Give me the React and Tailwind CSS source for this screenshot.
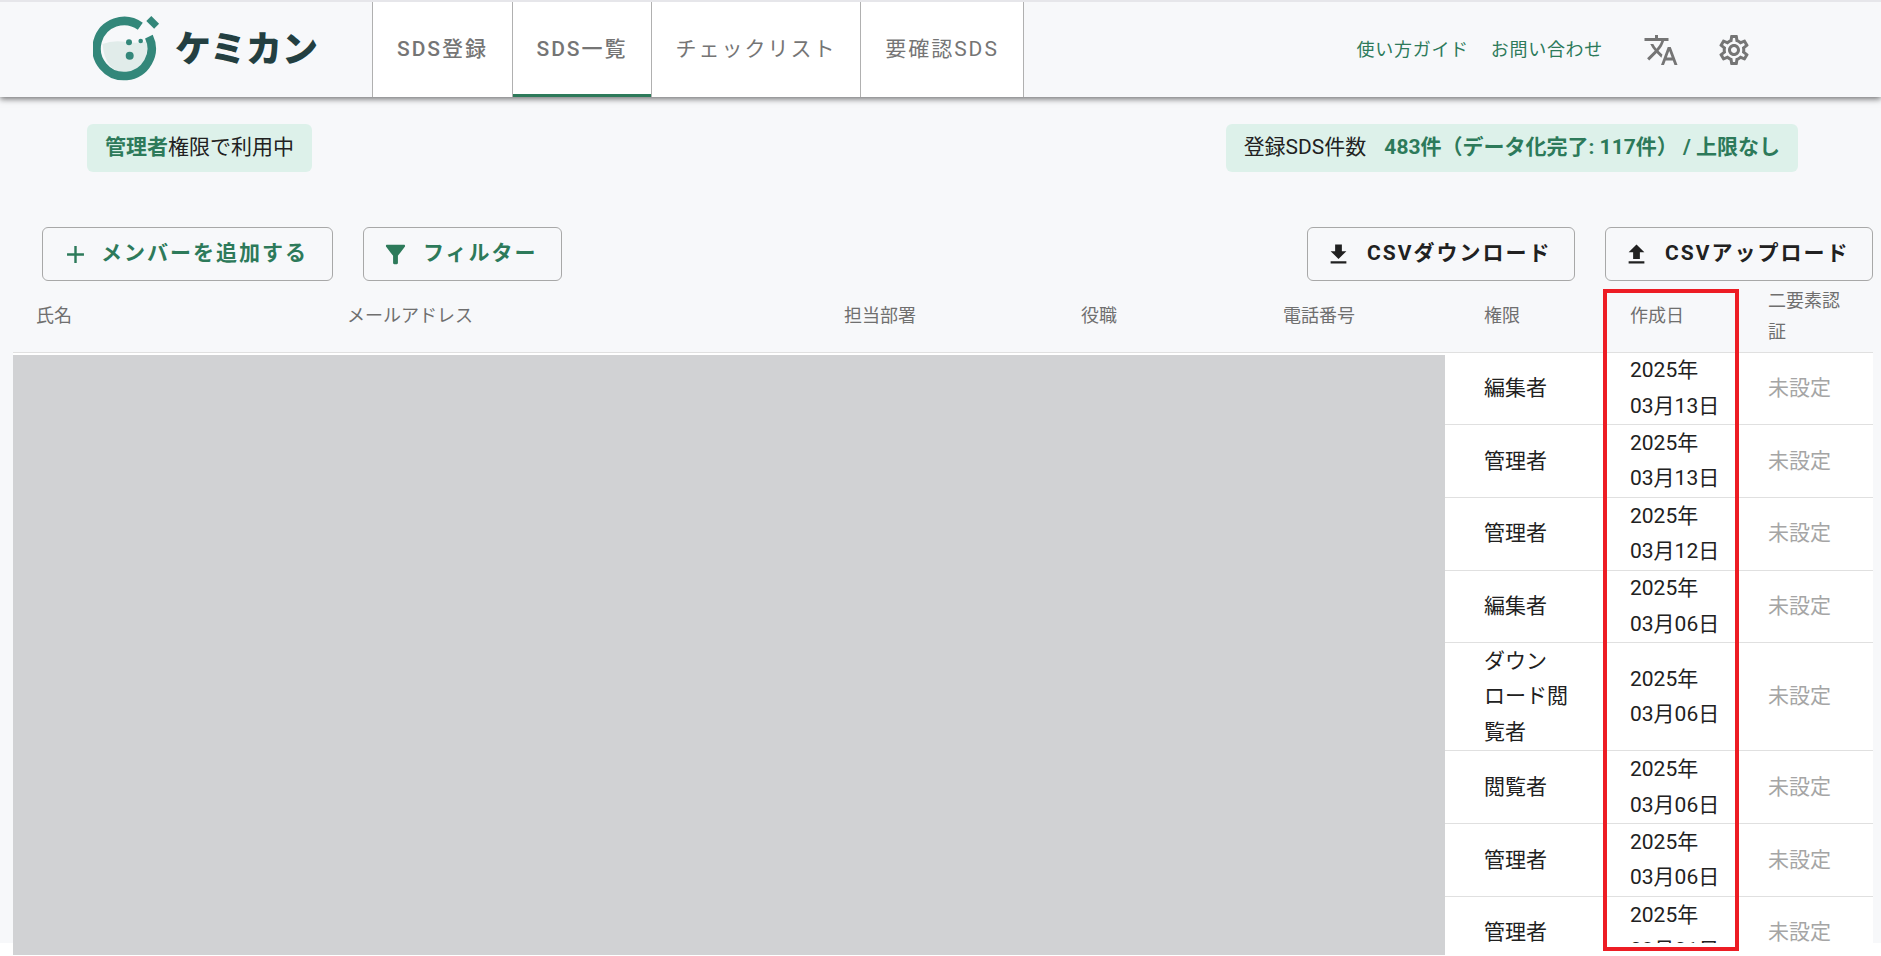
const TRANSLATE = "m12.87 15.07-2.54-2.51.03-.03c1.74-1.94 2.98-4.17 3.71-6.53H17V4h-7V2H8v2H1v1.99h11.17C11.5 7.92 10.25 9.75 9 11.17 8.19 10.23 7.46 9.27 6.87 8H4.84c.73 1.63 1.73 3.17 2.98 4.56l-5.09 5.02L4.14 19l5-5 3.11 3.11.76-2.04zM18.5 10h-2L12 22h2l1.12-3h4.75L21 22h2l-4.5-12zm-2.62 7 1.62-4.33L19.12 17h-3.24z";
const GEAR = "M19.43 12.98c.04-.32.07-.64.07-.98 0-.34-.03-.66-.07-.98l2.11-1.65c.19-.15.24-.42.12-.64l-2-3.46c-.09-.16-.26-.25-.44-.25-.06 0-.12.01-.17.03l-2.49 1c-.52-.4-1.08-.73-1.69-.98l-.38-2.65C14.46 2.18 14.25 2 14 2h-4c-.25 0-.46.18-.49.42l-.38 2.65c-.61.25-1.17.59-1.69.98l-2.49-1c-.06-.02-.12-.03-.18-.03-.17 0-.34.09-.43.25l-2 3.46c-.13.22-.07.49.12.64l2.11 1.65c-.04.32-.07.65-.07.98 0 .33.03.66.07.98l-2.11 1.65c-.19.15-.24.42-.12.64l2 3.46c.09.16.26.25.44.25.06 0 .12-.01.17-.03l2.49-1c.52.4 1.08.73 1.69.98l.38 2.65c.03.24.24.42.49.42h4c.25 0 .46-.18.49-.42l.38-2.65c.61-.25 1.17-.59 1.69-.98l2.49 1c.06.02.12.03.18.03.17 0 .34-.09.43-.25l2-3.46c.12-.22.07-.49-.12-.64l-2.11-1.65zm-1.98-1.71c.04.31.05.52.05.73 0 .21-.02.43-.05.73l-.14 1.13.89.7 1.08.84-.7 1.21-1.27-.51-1.04-.42-.9.68c-.43.32-.84.56-1.25.73l-1.06.43-.16 1.13-.2 1.35h-1.4l-.19-1.35-.16-1.13-1.06-.43c-.43-.18-.83-.41-1.23-.71l-.91-.7-1.06.43-1.27.51-.7-1.21 1.08-.84.89-.7-.14-1.13c-.03-.31-.05-.54-.05-.74s.02-.43.05-.73l.14-1.13-.89-.7-1.08-.84.7-1.21 1.27.51 1.04.42.9-.68c.43-.32.84-.56 1.25-.73l1.06-.43.16-1.13.2-1.35h1.39l.19 1.35.16 1.13 1.06.43c.43.18.83.41 1.23.71l.91.7 1.06-.43 1.27-.51.7 1.21-1.07.85-.89.7.14 1.13zM12 8c-2.21 0-4 1.79-4 4s1.79 4 4 4 4-1.79 4-4-1.79-4-4-4zm0 6c-1.1 0-2-.9-2-2s.9-2 2-2 2 .9 2 2-.9 2-2 2z";
const PLUS = "M19 13h-6v6h-2v-6H5v-2h6V5h2v6h6v2z";
const FILTER = "M4.25 5.61C6.27 8.2 10 13 10 13v6c0 .55.45 1 1 1h2c.55 0 1-.45 1-1v-6s3.72-4.8 5.74-7.39c.51-.66.04-1.61-.79-1.61H5.04c-.83 0-1.3.95-.79 1.61z";
const DOWNLOAD = "M5 20h14v-2H5v2zM19 9h-4V3H9v6H5l7 7 7-7z";
const UPLOAD = "M5 20h14v-2H5v2zm0-10h4v6h6v-6h4l-7-7-7 7z";

function Icon({ d, className }) {
  return (
    <svg viewBox="0 0 24 24" fill="currentColor" className={className}>
      <path d={d} />
    </svg>
  );
}

function Logo() {
  return (
    <svg viewBox="0 0 70 72" className="w-[70px] h-[72px] shrink-0">
      <path d="M9.5 30 Q20 26 33 28 Q45 30 55 27 Q54 58 33 59 Q12 58 9.5 30Z" fill="#e1ecea" />
      <path d="M55.9 22.6A27.5 27.5 0 1 1 47.3 12.3" fill="none" stroke="#33877a" strokeWidth="8.5" />
      <rect x="54.2" y="4.8" width="11" height="7" transform="rotate(45 59.7 8.3)" fill="#33877a" />
      <circle cx="36" cy="28.3" r="3" fill="#33877a" />
      <circle cx="36.7" cy="41.7" r="4" fill="#33877a" />
      <circle cx="47.7" cy="27" r="2.3" fill="#33877a" />
    </svg>
  );
}

function Tab({ children, active, width, light }) {
  return (
    <div
      className={`relative flex items-center justify-center h-full bg-white border-r border-[#b0b0b0] text-[21px] tracking-[2px] text-[#757575] ${width} ${light ? "font-normal" : "font-medium"}`}
    >
      {children}
      {active && <div className="absolute left-0 right-0 bottom-0 h-[3px] bg-[#2d7a5a]" />}
    </div>
  );
}

function Btn({ icon, iconClass, textClass, width, children }) {
  return (
    <button className={`flex items-center h-[54px] rounded-[6px] border border-[#a8a8a8] ${width} ${textClass}`}>
      <Icon d={icon} className={`shrink-0 ${iconClass}`} />
      <span className="text-[21px] font-bold tracking-[2px] whitespace-nowrap">{children}</span>
    </button>
  );
}

const ROWS = [
  ["編集者", "2025年", "03月13日"],
  ["管理者", "2025年", "03月13日"],
  ["管理者", "2025年", "03月12日"],
  ["編集者", "2025年", "03月06日"],
  [<>ダウン<br />ロード閲<br />覧者</>, "2025年", "03月06日"],
  ["閲覧者", "2025年", "03月06日"],
  ["管理者", "2025年", "03月06日"],
  ["管理者", "2025年", "03月01日"],
];

const HEADS = ["氏名", "メールアドレス", "担当部署", "役職", "電話番号", "権限", "作成日", <>二要素認<br />証</>];
const WIDTHS = ["w-[311px]", "w-[497px]", "w-[237px]", "w-[202px]", "w-[201px]", "w-[146px]", "w-[138px]", "w-[128px]"];

export default function App() {
  return (
    <div className="relative w-[1881px] h-[956px] overflow-hidden bg-white font-[Roboto,'Noto_Sans_CJK_JP',sans-serif] text-[#212121]">
      <div className="h-[2px] bg-[#e6e6ea]" />
      <div className="h-[941px] overflow-hidden bg-[#f7f8fa] flex flex-col">
        <header className="relative z-10 h-[95px] shrink-0 flex items-center bg-[#f7f8fa] shadow-[0_2px_6px_rgba(0,0,0,0.55)]">
          <div className="flex items-center w-[373px] h-full pl-[93px] border-r border-[#b0b0b0]">
            <Logo />
            <span className="ml-[12px] text-[36px] leading-none font-black text-[#233f41] whitespace-nowrap">ケミカン</span>
          </div>
          <Tab width="w-[140px]">SDS登録</Tab>
          <Tab width="w-[139px]" active>SDS一覧</Tab>
          <Tab width="w-[209px]" light>チェックリスト</Tab>
          <Tab width="w-[163px]" light>要確認SDS</Tab>
          <div className="ml-auto flex items-center pr-[129px]">
            <a className="text-[18px] tracking-[0.7px] text-[#2d7a5a]">使い方ガイド</a>
            <a className="ml-[22px] text-[18px] tracking-[0.7px] text-[#2d7a5a]">お問い合わせ</a>
            <Icon d={TRANSLATE} className="ml-[40px] w-[36px] h-[36px] text-[#757575]" />
            <Icon d={GEAR} className="ml-[37px] w-[36px] h-[36px] text-[#757575]" />
          </div>
        </header>

        <div className="mt-[27px] flex justify-between pl-[87px] pr-[83px]">
          <div className="flex items-center h-[48px] px-[18px] rounded-[6px] bg-[#ddf1ea] text-[21px]">
            <b className="font-bold text-[#2d7a5a]">管理者</b>権限で利用中
          </div>
          <div className="flex items-center h-[48px] px-[18px] rounded-[6px] bg-[#ddf1ea] text-[21px]">
            登録SDS件数
            <b className="ml-[18px] font-bold text-[#2d7a5a]">483件（データ化完了: 117件） / 上限なし</b>
          </div>
        </div>

        <div className="mt-[55px] flex pl-[42px] pr-[8px]">
          <Btn icon={PLUS} iconClass="ml-[18px] w-[29px] h-[29px] mr-[11px]" textClass="text-[#2d7a5a]" width="w-[291px]">メンバーを追加する</Btn>
          <Btn icon={FILTER} iconClass="ml-[17px] w-[29px] h-[29px] mr-[13px]" textClass="text-[#2d7a5a] ml-[30px]" width="w-[199px]">フィルター</Btn>
          <div className="ml-auto flex gap-[30px]">
            <Btn icon={DOWNLOAD} iconClass="ml-[17px] w-[27px] h-[27px] mr-[15px]" textClass="text-[#212121]" width="w-[268px]">CSVダウンロード</Btn>
            <Btn icon={UPLOAD} iconClass="ml-[17px] w-[27px] h-[27px] mr-[15px]" textClass="text-[#212121]" width="w-[268px]">CSVアップロード</Btn>
          </div>
        </div>

        <div className="pl-[13px] pr-[8px]">
          <table className="w-[1860px] table-fixed border-collapse">
            <colgroup>
              {WIDTHS.map((w, i) => (
                <col key={i} className={w} />
              ))}
            </colgroup>
            <thead>
              <tr className="h-[71px] border-b border-[#e0e0e0]">
                {HEADS.map((h, i) => (
                  <th key={i} className={`p-0 pl-[23px] text-left text-[18px] leading-[31px] font-normal text-[#6f6f6f] ${i < 7 ? "pb-[2px]" : ""}`}>
                    {h}
                  </th>
                ))}
              </tr>
            </thead>
            <tbody className="bg-white">
              {ROWS.map((r, i) => (
                <tr key={i} className="border-b border-[#e0e0e0]">
                  <td colSpan={5} className="p-0" />
                  <td className="p-0 pt-[0.7px] pl-[23px] text-[21px] leading-[35.5px]">{r[0]}</td>
                  <td className="p-0 pt-[0.7px] pl-[23px] text-[21px] leading-[35.5px]">
                    {r[1]}
                    <br />
                    {r[2]}
                  </td>
                  <td className="p-0 pt-[0.7px] pl-[23px] text-[21px] leading-[35.5px] text-[#a5a5a5]">未設定</td>
                </tr>
              ))}
            </tbody>
          </table>
        </div>
      </div>

      <div className="absolute left-[13px] top-[355px] w-[1432px] h-[600px] bg-[#d1d2d4]" />
      <div className="absolute left-[1603px] top-[289px] w-[136px] h-[662px] border-[4px] border-[#ed1c24]" />
    </div>
  );
}
